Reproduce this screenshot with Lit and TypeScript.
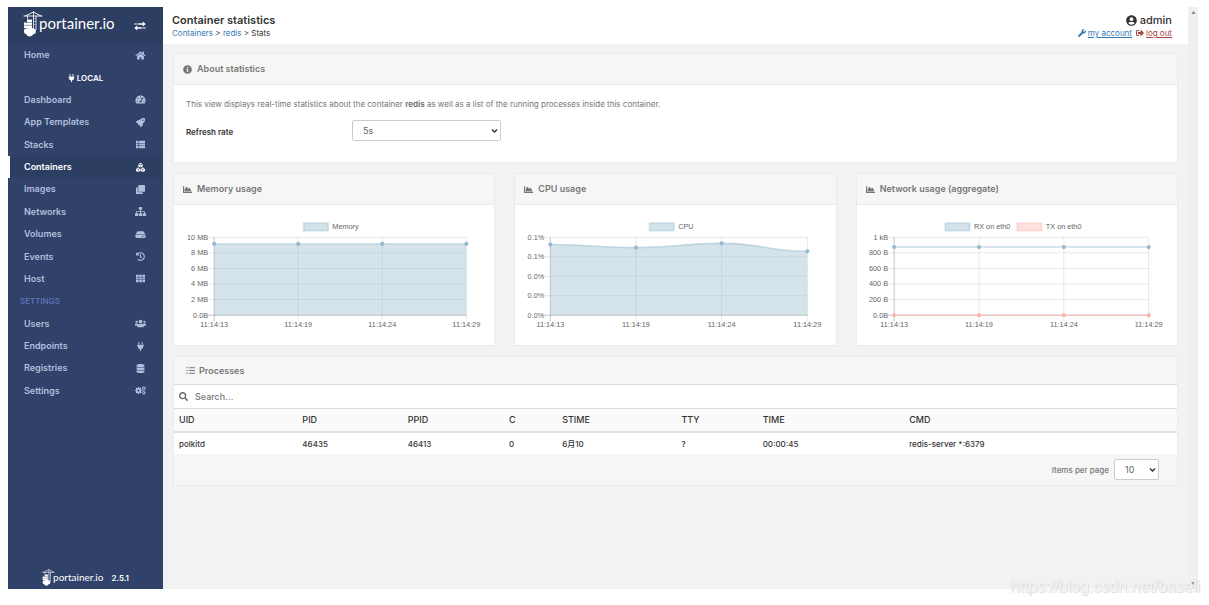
import { LitElement, html, svg, css } from "lit";
import { customElement, property } from "lit/decorators.js";

/* ---------- icons ---------- */

const gear = (cx: number, cy: number, r: number, teeth: number, turn = 0) => svg`
  <circle cx=${cx} cy=${cy} r=${r * 0.58} fill="none" stroke="currentColor" stroke-width=${r * 0.5}></circle>
  ${Array.from({ length: teeth }, (_, i) => svg`
    <rect x=${cx - r * 0.2} y=${cy - r * 1.08} width=${r * 0.4} height=${r * 0.42}
      transform="rotate(${turn + (i * 360) / teeth} ${cx} ${cy})"></rect>`)}`;

const cube = (x: number, y: number) => svg`
  <path transform="translate(${x} ${y})" d="M124 0L236 40 124 88 12 40zM0 66l112 46v138L0 202zM248 66L136 112v138l112-48z"></path>`;

const ICONS: Record<string, [string, unknown]> = {
  home: ["0 0 576 512", svg`<path d="M280.37 148.26L96 300.11V464a16 16 0 0 0 16 16l112.06-.29a16 16 0 0 0 15.92-16V368a16 16 0 0 1 16-16h64a16 16 0 0 1 16 16v95.64a16 16 0 0 0 16 16.05L464 480a16 16 0 0 0 16-16V300L295.67 148.26a12.19 12.19 0 0 0-15.3 0zM571.6 251.47L488 182.56V44.05a12 12 0 0 0-12-12h-56a12 12 0 0 0-12 12v72.61L318.47 43a48 48 0 0 0-61 0L4.34 251.47a12 12 0 0 0-1.6 16.9l25.5 31A12 12 0 0 0 45.15 301l235.22-193.74a12.19 12.19 0 0 1 15.3 0L530.9 301a12 12 0 0 0 16.9-1.6l25.5-31a12 12 0 0 0-1.7-16.93z"></path>`],
  plug: ["0 0 384 512", svg`<path d="M320 32a32 32 0 0 0-64 0v96h64zm48 128H16a16 16 0 0 0-16 16v32a16 16 0 0 0 16 16h16v32a160.07 160.07 0 0 0 128 156.8V512h64v-99.2A160.07 160.07 0 0 0 352 256v-32h16a16 16 0 0 0 16-16v-32a16 16 0 0 0-16-16zM128 32a32 32 0 0 0-64 0v96h64z"></path>`],
  gauge: ["0 0 576 512", svg`<path fill-rule="evenodd" d="M288 32C129 32 0 161 0 320c0 53 14 102 39 145 6 9 16 15 28 15h442c12 0 22-6 28-15 25-43 39-92 39-145C576 161 447 32 288 32zM288 96a32 32 0 1 1 0 64 32 32 0 0 1 0-64zM96 384a32 32 0 1 1 0-64 32 32 0 0 1 0 64zM144 224a32 32 0 1 1 0-64 32 32 0 0 1 0 64zM391 143c13 4 20 18 15 31l-60 180c14 17 16 45 4 64H226c-20-48 12-98 62-98h12l60-162c4-12 18-19 31-15zM432 224a32 32 0 1 1 0-64 32 32 0 0 1 0 64zM480 384a32 32 0 1 1 0-64 32 32 0 0 1 0 64z"></path>`],
  rocket: ["0 0 512 512", svg`<path d="M505.12 19.09c-1.19-5.53-6.66-11-12.21-12.19C460.72 0 435.51 0 410.41 0 307.18 0 245.27 55.2 199.05 128H94.84c-16.35.02-35.56 11.88-42.89 26.48L2.52 253.3A28.4 28.4 0 0 0 0 264a24 24 0 0 0 24 24h103.8l-22.47 22.47c-11.36 11.36-13 32.26 0 45.25l50.91 50.9c11.16 11.19 32.16 13.16 45.28 0L224 384.16V488a24 24 0 0 0 24 24 28.56 28.56 0 0 0 10.71-2.52l98.73-49.39c14.63-7.29 26.5-26.5 26.5-42.86V312.8c72.6-46.31 128.04-108.4 128.04-211.1.1-25.2.1-50.4-6.86-82.6zM384.04 168A40 40 0 1 1 424.05 128 40 40 0 0 1 384.04 168z"></path>`],
  list: ["0 0 512 512", svg`<path d="M0 40h140v124H0zM180 40h332v124H180zM0 194h140v124H0zM180 194h332v124H180zM0 348h140v124H0zM180 348h332v124H180z"></path>`],
  cubes: ["0 0 512 512", svg`${cube(132, 0)}${cube(0, 256)}${cube(264, 256)}`],
  clone: ["0 0 512 512", svg`<path d="M176 0h288a48 48 0 0 1 48 48v288a48 48 0 0 1-48 48H176a48 48 0 0 1-48-48V48a48 48 0 0 1 48-48zM48 128h48v208a80 80 0 0 0 80 80h208v48a48 48 0 0 1-48 48H48a48 48 0 0 1-48-48V176a48 48 0 0 1 48-48z"></path>`],
  sitemap: ["0 0 640 512", svg`<path d="M256 0h128a32 32 0 0 1 32 32v96a32 32 0 0 1-32 32h-40v64h184a48 48 0 0 1 48 48v80h32a32 32 0 0 1 32 32v96a32 32 0 0 1-32 32H480a32 32 0 0 1-32-32v-96a32 32 0 0 1 32-32h48v-80H344v80h40a32 32 0 0 1 32 32v96a32 32 0 0 1-32 32H256a32 32 0 0 1-32-32v-96a32 32 0 0 1 32-32h40v-80H112v80h48a32 32 0 0 1 32 32v96a32 32 0 0 1-32 32H32a32 32 0 0 1-32-32v-96a32 32 0 0 1 32-32h32v-80a48 48 0 0 1 48-48h184v-64h-40a32 32 0 0 1-32-32V32a32 32 0 0 1 32-32z"></path>`],
  hdd: ["0 0 576 512", svg`<path d="M576 304v96c0 26.51-21.49 48-48 48H48c-26.51 0-48-21.49-48-48v-96c0-26.51 21.49-48 48-48h480c26.51 0 48 21.49 48 48zm-48-80a79.557 79.557 0 0 1 30.777 6.165L462.25 85.374A48.003 48.003 0 0 0 422.311 64H153.689a48 48 0 0 0-39.938 21.374L17.223 230.165A79.557 79.557 0 0 1 48 224h480zm-48 96c-17.673 0-32 14.327-32 32s14.327 32 32 32 32-14.327 32-32-14.327-32-32-32zm-96 0c-17.673 0-32 14.327-32 32s14.327 32 32 32 32-14.327 32-32-14.327-32-32-32z"></path>`],
  history: ["0 0 512 512", svg`<path d="M504 255.531c.253 136.64-111.18 248.372-247.82 248.468-59.015.042-113.223-20.53-155.822-54.911-11.077-8.94-11.905-25.541-1.839-35.607l11.267-11.267c8.609-8.609 22.353-9.551 31.891-1.984C173.062 425.135 212.781 440 256 440c101.705 0 184-82.311 184-184 0-101.705-82.311-184-184-184-48.814 0-93.149 18.969-126.068 49.932l50.754 50.754c10.08 10.08 2.941 27.314-11.313 27.314H24c-8.837 0-16-7.163-16-16V38.627c0-14.254 17.234-21.393 27.314-11.314l49.372 49.372C129.209 34.136 189.552 8 256 8c136.81 0 247.747 110.78 248 247.531zm-180.912 78.784l9.823-12.63c8.138-10.463 6.253-25.542-4.21-33.679L288 256.349V152c0-13.255-10.745-24-24-24h-16c-13.255 0-24 10.745-24 24v135.651l65.409 50.874c10.463 8.137 25.541 6.253 33.679-4.21z"></path>`],
  grid: ["0 0 512 512", svg`<path d="M0 40h148v124H0zM182 40h148v124H182zM364 40h148v124H364zM0 194h148v124H0zM182 194h148v124H182zM364 194h148v124H364zM0 348h148v124H0zM182 348h148v124H182zM364 348h148v124H364z"></path>`],
  users: ["0 0 640 512", svg`<circle cx="96" cy="160" r="62"></circle><circle cx="544" cy="160" r="62"></circle><circle cx="320" cy="146" r="108"></circle><path d="M32 256h128c18 0 33 7 45 18-40 22-69 62-75 110H32a32 32 0 0 1-32-32v-32a64 64 0 0 1 32-64zM608 256H480c-18 0-33 7-45 18 40 22 69 62 75 110h98a32 32 0 0 0 32-32v-32a64 64 0 0 0-32-64zM243 288h154a115 115 0 0 1 115 115v29a48 48 0 0 1-48 48H176a48 48 0 0 1-48-48v-29a115 115 0 0 1 115-115z"></path>`],
  database: ["0 0 448 512", svg`<path d="M448 73.143v45.714C448 159.143 347.667 192 224 192S0 159.143 0 118.857V73.143C0 32.857 100.333 0 224 0s224 32.857 224 73.143zM448 176v102.857C448 319.143 347.667 352 224 352S0 319.143 0 278.857V176c48.125 33.143 136.208 48.572 224 48.572S399.874 209.143 448 176zm0 160v102.857C448 479.143 347.667 512 224 512S0 479.143 0 438.857V336c48.125 33.143 136.208 48.572 224 48.572S399.874 369.143 448 336z"></path>`],
  cogs: ["0 0 640 512", svg`${gear(205, 256, 185, 8)}${gear(510, 130, 115, 6)}${gear(510, 382, 115, 6, 30)}`],
  exchange: ["0 0 22 18", svg`<path d="M1 4h2v2.6H1zM4.5 4h2v2.6h-2zM8 4h8V.8l5.5 4.500L16 9.800V6.600H8zM21 11.400h-2V14h2zM17.500 11.400h-2V14h2zM14 11.400H6V8.200L.5 12.700 6 17.200V14h8z"></path>`],
  info: ["0 0 512 512", svg`<path d="M256 8C119.043 8 8 119.083 8 256c0 136.997 111.043 248 248 248s248-111.003 248-248C504 119.083 392.957 8 256 8zm0 110c23.196 0 42 18.804 42 42s-18.804 42-42 42-42-18.804-42-42 18.804-42 42-42zm56 254c0 6.627-5.373 12-12 12h-88c-6.627 0-12-5.373-12-12v-24c0-6.627 5.373-12 12-12h12v-64h-12c-6.627 0-12-5.373-12-12v-24c0-6.627 5.373-12 12-12h64c6.627 0 12 5.373 12 12v100h12c6.627 0 12 5.373 12 12v24z"></path>`],
  area: ["0 0 512 512", svg`<path d="M500 384c6.600 0 12 5.400 12 12v40c0 6.600-5.400 12-12 12H12c-6.600 0-12-5.400-12-12V76c0-6.600 5.400-12 12-12h40c6.600 0 12 5.400 12 12v308h436zM372.700 159.500L288 216l-85.300-113.700c-5.100-6.800-15.500-6.300-19.900 1L96 248v104h384l-89.900-187.800c-3.200-6.500-11.400-8.700-17.400-4.700z"></path>`],
  tasks: ["0 0 512 512", svg`<path d="M180 70h332v52H180zM180 230h332v52H180zM180 390h332v52H180z"></path><path d="M12 84l42 40 78-84M12 244l42 40 78-84" fill="none" stroke="currentColor" stroke-width="40"></path><circle cx="72" cy="416" r="42"></circle>`],
  search: ["0 0 512 512", svg`<path d="M505 442.700L405.300 343c-4.500-4.500-10.600-7-17-7H372c27.600-35.300 44-79.700 44-128C416 93.100 322.900 0 208 0S0 93.100 0 208s93.100 208 208 208c48.300 0 92.700-16.400 128-44v16.300c0 6.400 2.500 12.500 7 17l99.700 99.700c9.400 9.400 24.600 9.400 33.900 0l28.300-28.300c9.400-9.400 9.400-24.600.1-34zM208 336c-70.700 0-128-57.200-128-128 0-70.700 57.200-128 128-128 70.700 0 128 57.200 128 128 0 70.700-57.200 128-128 128z"></path>`],
  user: ["0 0 496 512", svg`<path d="M248 8C111 8 0 119 0 256s111 248 248 248 248-111 248-248S385 8 248 8zm0 96c48.600 0 88 39.400 88 88s-39.400 88-88 88-88-39.400-88-88 39.400-88 88-88zm0 344c-58.700 0-111.300-26.600-146.500-68.200 18.800-35.400 55.600-59.800 98.500-59.800 2.400 0 4.800.4 7.100 1.100 13 4.200 26.600 6.900 40.900 6.900 14.300 0 28-2.700 40.900-6.900 2.300-.7 4.700-1.100 7.100-1.100 42.900 0 79.700 24.400 98.500 59.800C359.300 421.400 306.700 448 248 448z"></path>`],
  wrench: ["0 0 512 512", svg`<path d="M507.730 109.100c-2.240-9.030-13.540-12.090-20.120-5.510l-74.360 74.360-67.880-11.310-11.310-67.880 74.360-74.360c6.620-6.620 3.430-17.900-5.660-20.160-47.380-11.740-99.550.91-136.580 37.930-39.640 39.640-50.550 97.100-34.050 147.200L18.740 402.760c-24.990 24.990-24.990 65.510 0 90.500 24.990 24.990 65.510 24.990 90.500 0l213.210-213.210c50.120 16.710 107.470 5.680 147.370-34.220 37.070-37.070 49.700-89.320 37.910-136.730zM64 472c-13.250 0-24-10.750-24-24 0-13.260 10.750-24 24-24s24 10.740 24 24c0 13.250-10.750 24-24 24z"></path>`],
  logout: ["0 0 512 512", svg`<path d="M497 273L329 441c-15 15-41 4.500-41-17v-96H152c-13.300 0-24-10.700-24-24v-96c0-13.300 10.700-24 24-24h136V88c0-21.400 25.900-32 41-17l168 168c9.300 9.400 9.300 24.600 0 34zM192 436v-40c0-6.600-5.400-12-12-12H96c-17.700 0-32-14.300-32-32V160c0-17.700 14.300-32 32-32h84c6.600 0 12-5.400 12-12V76c0-6.600-5.400-12-12-12H96c-53 0-96 43-96 96v192c0 53 43 96 96 96h84c6.600 0 12-5.400 12-12z"></path>`],
};

const icon = (name: string) => html`
  <svg class="icon" viewBox=${ICONS[name][0]} fill="currentColor" aria-hidden="true">${ICONS[name][1]}</svg>`;

const crane = html`
  <svg class="crane" viewBox="0 0 20 26" fill="none" stroke="currentColor" aria-hidden="true">
    <path d="M.5 5h19M2 5l8.500-4L18 5" stroke-width=".9"></path>
    <path d="M10.500 .5v19M13 5v14M4.500 5v3" stroke-width=".8"></path>
    <path d="M10.500 7.500h2.500M10.500 10.500h2.500M10.500 13.500h2.500" stroke-width=".4"></path>
    <path d="M4 8.500h5v8.500H1v-5.500h3z" fill="currentColor" stroke="none"></path>
    <path d="M3 11.500h6M1 14.300h8" stroke="#2d3e63" stroke-width=".5"></path>
    <path d="M1 20.200c-.2-2 1.500-3.200 3.500-2.800 1.500-1.200 4.400-1.100 5.500 0 2-.2 3.300 1.300 2.800 3 .3 1.600-.9 2.700-2.300 2.700-.8 1.700-2.500 2.400-3.800 2.400-1.700 0-3-.8-3.300-2.200C1.900 23 .8 21.800 1 20.200z" fill="currentColor" stroke="none"></path>
  </svg>`;

/* ---------- stats chart ---------- */

interface Series { label: string; tone: "blue" | "rose"; filled: boolean; boxX: number; values: number[]; }
interface ChartSpec { left: number; right: number; ticks: string[]; series: Series[]; }

const TOP = 53;
const BOTTOM = 181;
const TIMES = ["11:14:13", "11:14:19", "11:14:24", "11:14:29"];

@customElement("stats-chart")
class StatsChart extends LitElement {
  @property({ attribute: false }) spec!: ChartSpec;

  static styles = css`
    :host { display: block; }
    svg { display: block; width: 100%; height: auto; }
    text { font: 12px "Liberation Sans", Arial, sans-serif; fill: #666; }
    .end { text-anchor: end; }
    .mid { text-anchor: middle; }
    .grid { stroke: rgba(0, 0, 0, 0.1); stroke-width: 1.5; fill: none; }
    .axis { stroke: rgba(0, 0, 0, 0.17); stroke-width: 1.5; fill: none; }
    .line { fill: none; stroke-width: 2.5; }
    .blue { stroke: rgba(151, 187, 205, 0.5); }
    .rose { stroke: rgba(255, 180, 174, 0.5); }
    .area { stroke: none; fill: rgba(151, 187, 205, 0.4); }
    .dot-blue { fill: #97bbcd; }
    .dot-rose { fill: #ffb4ae; }
    .box { stroke-width: 3; }
    .box.blue { fill: rgba(151, 187, 205, 0.4); stroke: rgba(151, 187, 205, 0.4); }
    .box.rose { fill: rgba(255, 180, 174, 0.4); stroke: rgba(255, 180, 174, 0.4); }
  `;

  render() {
    const { left, right, ticks, series } = this.spec;
    const xs = TIMES.map((_, i) => left + ((right - left) * i) / (TIMES.length - 1));
    const ys = ticks.map((_, i) => TOP + ((BOTTOM - TOP) * i) / (ticks.length - 1));
    const curve = (v: number[]) =>
      v.slice(1).reduce((d, y, i) => {
        const mid = (xs[i] + xs[i + 1]) / 2;
        return `${d} C${mid} ${v[i]} ${mid} ${y} ${xs[i + 1]} ${y}`;
      }, `M${xs[0]} ${v[0]}`);
    return html`
      <svg viewBox="0 0 526 230" role="img" aria-label=${series.map((s) => s.label).join(", ")}>
        ${ys.map((y) => svg`<path class="grid" d="M${left - 10} ${y}H${right}"></path>`)}
        ${xs.map((x) => svg`<path class="grid" d="M${x} ${TOP}V${BOTTOM + 10}"></path>`)}
        <path class="axis" d="M${left} ${TOP}V${BOTTOM + 10}M${left - 10} ${BOTTOM}H${right}"></path>
        ${series.map((s) => svg`
          ${s.filled ? svg`<path class="area" d="${curve(s.values)}V${BOTTOM}H${left}z"></path>` : ""}
          <path class="line ${s.tone}" d=${curve(s.values)}></path>
          ${s.values.map((y, i) => svg`<circle class="dot-${s.tone}" cx=${xs[i]} cy=${y} r="3.500"></circle>`)}
          <rect class="box ${s.tone}" x=${s.boxX} y="30" width="40" height="12"></rect>
          <text x=${s.boxX + 47} y="40">${s.label}</text>`)}
        ${ticks.map((t, i) => svg`<text class="end" x=${left - 10} y=${ys[i] + 4}>${t}</text>`)}
        ${TIMES.map((t, i) => svg`<text class="mid" x=${xs[i]} y="201">${t}</text>`)}
      </svg>`;
  }
}

/* ---------- page ---------- */

const MENU: { text: string; icon?: string; kind?: string }[] = [
  { text: "Home", icon: "home" },
  { text: "LOCAL", kind: "endpoint" },
  { text: "Dashboard", icon: "gauge" },
  { text: "App Templates", icon: "rocket" },
  { text: "Stacks", icon: "list" },
  { text: "Containers", icon: "cubes", kind: "active" },
  { text: "Images", icon: "clone" },
  { text: "Networks", icon: "sitemap" },
  { text: "Volumes", icon: "hdd" },
  { text: "Events", icon: "history" },
  { text: "Host", icon: "grid" },
  { text: "SETTINGS", kind: "title" },
  { text: "Users", icon: "users" },
  { text: "Endpoints", icon: "plug" },
  { text: "Registries", icon: "database" },
  { text: "Settings", icon: "cogs" },
];

const CHARTS: { title: string; spec: ChartSpec }[] = [
  {
    title: "Memory usage",
    spec: {
      left: 66, right: 480, ticks: ["10 MB", "8 MB", "6 MB", "4 MB", "2 MB", "0.0B"],
      series: [{ label: "Memory", tone: "blue", filled: true, boxX: 213, values: [64, 64, 64, 64] }],
    },
  },
  {
    title: "CPU usage",
    spec: {
      left: 58, right: 480, ticks: ["0.1%", "0.1%", "0.0%", "0.0%", "0.0%"],
      series: [{ label: "CPU", tone: "blue", filled: true, boxX: 221, values: [65, 70, 63, 76] }],
    },
  },
  {
    title: "Network usage (aggregate)",
    spec: {
      left: 61, right: 479, ticks: ["1 kB", "800 B", "600 B", "400 B", "200 B", "0.0B"],
      series: [
        { label: "RX on eth0", tone: "blue", filled: false, boxX: 145, values: [69, 69, 69, 69] },
        { label: "TX on eth0", tone: "rose", filled: false, boxX: 263, values: [181, 181, 181, 181] },
      ],
    },
  },
];

const COLUMNS = ["UID", "PID", "PPID", "C", "STIME", "TTY", "TIME", "CMD"];
const ROWS = [["polkitd", "46435", "46413", "0", "6月10", "?", "00:00:45", "redis-server *:6379"]];

@customElement("app-root")
class AppRoot extends LitElement {
  static styles = css`
    :host {
      display: block;
      font: 9px/12px Inter, "Noto Sans CJK SC", sans-serif;
      color: #333;
      background: #fff;
    }
    *, *::before, *::after { box-sizing: border-box; }
    a { color: inherit; text-decoration: none; }
    .frame { display: flex; height: 100vh; padding: 7px 11px 16px 8px; }
    .icon { display: block; flex: none; width: 10px; height: 10px; }

    .sidebar { flex: none; display: flex; flex-direction: column; width: 155px; background: #30426a; color: #b2bfdc; }
    .brand-bar { display: flex; justify-content: space-between; align-items: center; height: 37px; padding: 0 17px 0 15px; background: #2d3e63; color: #fff; }
    .brand { display: flex; align-items: flex-start; font: 15px/24px Lato, sans-serif; color: #fff; }
    .brand .crane { width: 20px; height: 26px; margin-right: -4px; }
    .brand-bar .brand { padding-bottom: 3px; }
    .toggle { padding: 0; border: 0; background: none; color: #fff; }
    .toggle .icon { width: 12px; }
    .menu { display: grid; grid-auto-rows: 1fr; height: 358px; margin: 0; padding: 0; list-style: none; font-weight: 600; }
    .menu li { display: flex; }
    .item { flex: 1; display: flex; align-items: center; justify-content: space-between; padding: 0 17px 0 16px; font-size: 9px; }
    .item .icon { width: 11px; height: 9px; }
    .active .item { padding-left: 14px; border-left: 2px solid #fff; background: #2d3e63; color: #fff; font-weight: 600; }
    .endpoint { align-items: center; justify-content: center; gap: 2px; color: #fff; font-size: 8px; }
    .endpoint .icon { width: 7px; height: 8px; }
    .menu .title { align-items: center; padding-left: 12px; color: #5b76b8; font-size: 8px; font-weight: 500; }
    .version { display: flex; align-items: center; justify-content: center; gap: 8px; margin-top: auto; padding-bottom: 3px; color: #fff; font-size: 8px; font-weight: 600; }
    .version .brand { font-size: 10px; line-height: 16px; font-weight: 400; }
    .version .crane { width: 13px; height: 17px; margin-right: -2px; }

    .main { flex: 1; min-width: 0; background: #f2f2f2; }
    .topbar { display: flex; justify-content: space-between; height: 37px; padding: 7px 16px 0 9px; background: #fff; }
    h1 { margin: 0; font-size: 11px; line-height: 13px; font-weight: 600; }
    .crumbs, .links { font-size: 8px; line-height: 12px; }
    .crumbs { font-weight: 400; }
    .link { color: #337ab7; }
    .account { text-align: right; }
    .who { display: flex; align-items: center; justify-content: flex-end; gap: 3px; font-size: 11px; line-height: 13px; font-weight: 500; }
    .who .icon { width: 11px; height: 11px; }
    .links { display: flex; gap: 4px; justify-content: flex-end; }
    .links a { display: flex; align-items: center; gap: 2px; text-decoration: underline; }
    .links .icon { width: 8px; height: 8px; }
    .out { color: #a94442; }

    .content { display: flex; flex-direction: column; gap: 10px; padding: 9px 10px 0; }
    .card { border: 1px solid #ebebeb; background: #fff; min-width: 0; }
    .card-head { display: flex; align-items: center; gap: 5px; height: 31px; margin: 0; padding: 0 9px; border-bottom: 1px solid #ebebeb; background: #f6f6f6; color: #767676; font-size: 9px; font-weight: 600; }
    .card-head .icon { width: 9px; height: 9px; }
    .about { padding: 13px 12px 21px; }
    .about p { margin: 0 0 10px; color: #777; font-size: 8px; line-height: 12px; }
    .field { display: grid; grid-template-columns: 166px 1fr; align-items: center; }
    .field label { padding-top: 3px; font-size: 8px; font-weight: 600; }
    select {
      appearance: none; height: 21px; margin: 0; padding: 0 20px 0 10px; border: 1px solid #ccc; border-radius: 2px;
      color: #666; font: inherit;
      background: #fff url("data:image/svg+xml,%3Csvg xmlns='http://www.w3.org/2000/svg' viewBox='0 0 8 6'%3E%3Cpath d='M1 1.200l3 3 3-3' fill='none' stroke='%23333' stroke-width='1.500'/%3E%3C/svg%3E") no-repeat right 2px center / 7px 6px;
    }
    .rate { width: 149px; }
    .charts { display: grid; grid-template-columns: repeat(3, 1fr); gap: 19px; }

    .processes .card-head { height: 28px; padding: 0 12px; gap: 4px; border-color: #ddd; }
    .search { display: flex; align-items: center; gap: 7px; height: 24px; padding: 0 5px; border-bottom: 1px solid #ddd; color: #666; }
    .search .icon { width: 9px; height: 9px; }
    .search input { flex: 1; padding: 0; border: 0; outline: 0; background: none; font: inherit; font-weight: 500; color: inherit; }
    .search input::placeholder { color: #777; opacity: 1; }
    table { width: 100%; border-collapse: separate; border-spacing: 0; table-layout: fixed; }
    th, td { padding: 0 5px; text-align: left; white-space: nowrap; }
    th { height: 24px; border-bottom: 2px solid #e2e2e2; background: #fafafa; font-size: 9px; font-weight: 500; }
    td { height: 21px; font-size: 8px; font-weight: 500; }
    .w-uid { width: 12.3%; } .w-pid { width: 10.5%; } .w-ppid { width: 10.1%; } .w-c { width: 5.3%; }
    .w-stime { width: 11.9%; } .w-tty { width: 8.1%; } .w-time { width: 14.6%; }
    .pager { display: flex; align-items: center; justify-content: flex-end; gap: 5px; height: 31px; padding-right: 18px; background: #f6f6f6; color: #777; font-size: 8px; font-weight: 500; }
    .pager select { width: 45px; font-size: 9px; font-weight: 400; }

    .scroll { flex: none; display: flex; flex-direction: column; justify-content: space-between; align-items: center; width: 10px; padding: 4px 0; background: #f0f0f0; }
    .scroll svg { width: 5px; height: 3px; fill: #8a8a8a; }
    .watermark { position: absolute; right: 9px; bottom: 9px; font: 16px/18px "Liberation Sans", Arial, sans-serif; color: rgba(255, 255, 255, 0.8); text-shadow: 0 0 1px #ccc, 1px 1px 1px #ddd; }
  `;

  private menuEntry(m: (typeof MENU)[number]) {
    if (m.kind === "endpoint") return html`<li class="endpoint">${icon("plug")}${m.text}</li>`;
    if (m.kind === "title") return html`<li class="title">${m.text}</li>`;
    return html`<li class=${m.kind ?? ""}><a class="item" href="#">${m.text}${icon(m.icon!)}</a></li>`;
  }

  render() {
    return html`
      <div class="frame">
        <nav class="sidebar">
          <div class="brand-bar">
            <a class="brand" href="#">${crane}<span>portainer.io</span></a>
            <button class="toggle" aria-label="Toggle sidebar">${icon("exchange")}</button>
          </div>
          <ul class="menu">${MENU.map((m) => this.menuEntry(m))}</ul>
          <div class="version"><span class="brand">${crane}<span>portainer.io</span></span><span>2.5.1</span></div>
        </nav>
        <main class="main">
          <header class="topbar">
            <div>
              <h1>Container statistics</h1>
              <div class="crumbs"><a class="link" href="#">Containers</a> &gt; <a class="link" href="#">redis</a> &gt; Stats</div>
            </div>
            <div class="account">
              <div class="who">${icon("user")}admin</div>
              <div class="links">
                <a class="link" href="#">${icon("wrench")}my account</a>
                <a class="out" href="#">${icon("logout")}log out</a>
              </div>
            </div>
          </header>
          <div class="content">
            <section class="card">
              <h2 class="card-head">${icon("info")}About statistics</h2>
              <div class="about">
                <p>This view displays real-time statistics about the container <b>redis</b> as well as a list of the running processes inside this container.</p>
                <div class="field">
                  <label for="rate">Refresh rate</label>
                  <select id="rate" class="rate"><option>5s</option></select>
                </div>
              </div>
            </section>
            <div class="charts">
              ${CHARTS.map((c) => html`
                <section class="card">
                  <h2 class="card-head">${icon("area")}${c.title}</h2>
                  <stats-chart .spec=${c.spec}></stats-chart>
                </section>`)}
            </div>
            <section class="card processes">
              <h2 class="card-head">${icon("tasks")}Processes</h2>
              <label class="search">${icon("search")}<input type="text" placeholder="Search..." aria-label="Search processes" /></label>
              <table>
                <thead><tr>${COLUMNS.map((c) => html`<th class="w-${c.toLowerCase()}">${c}</th>`)}</tr></thead>
                <tbody>${ROWS.map((r) => html`<tr>${r.map((v) => html`<td>${v}</td>`)}</tr>`)}</tbody>
              </table>
              <div class="pager">
                <label for="per-page">Items per page</label>
                <select id="per-page"><option>10</option></select>
              </div>
            </section>
          </div>
        </main>
        <div class="scroll" aria-hidden="true">
          <svg viewBox="0 0 6 4"><path d="M0 4l3-4 3 4z"></path></svg>
          <svg viewBox="0 0 6 4"><path d="M0 0l3 4 3-4z"></path></svg>
        </div>
      </div>
      <div class="watermark">https://blog.csdn.net/baseli</div>
    `;
  }
}
